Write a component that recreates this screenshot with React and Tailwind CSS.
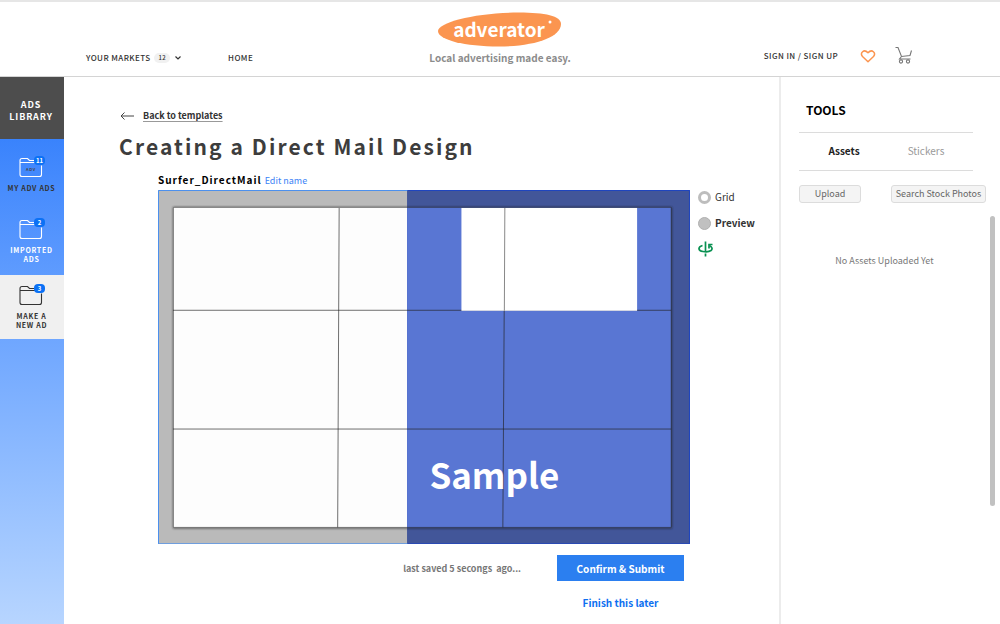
import React from "react";

function Folder({ count, tone, inner }) {
  return (
    <svg viewBox="0 0 32 24" className={"h-6 w-8 " + tone} fill="none" aria-hidden="true">
      <path d="M20 5.500H13.500L11.500 3.500H6Q4 3.500 4 5.500V19.500Q4 21.500 6 21.500H23.500Q25.500 21.500 25.500 19.500V10.500M4 7.500H20" stroke="currentColor" strokeWidth="1.100" />
      {inner && <text x="15" y="15.500" fontSize="4" textAnchor="middle" className="fill-[#454545] font-bold">{inner}</text>}
      <rect x="18" y="1" width="11" height="9" rx="4" className="fill-[#0b71f5]" />
      <text x="23.500" y="7.500" fontSize="6" textAnchor="middle" className="fill-white font-bold tracking-normal">{count}</text>
    </svg>
  );
}

function SideLink({ count, lines, className, tone, inner }) {
  return (
    <a href="#" className={"flex flex-col items-center text-center text-[7px] leading-[9px] font-bold tracking-widest whitespace-nowrap " + className}>
      <Folder count={count} tone={tone} inner={inner} />
      <span className="mt-[5px] pr-px">
        {lines.map((l) => <span key={l} className="block">{l}</span>)}
      </span>
    </a>
  );
}

function Header() {
  return (
    <header className="grid h-[77px] grid-cols-[1fr_160px_1fr] border-t-2 border-b border-t-[#e6e6e6] border-b-[#d4d4d4] text-[8px] font-medium text-[#333]">
      <nav className="flex items-center gap-[46px] pt-[38px] pl-[86px] tracking-wider">
        <button className="flex items-center gap-1 tracking-wider">
          YOUR MARKETS
          <span className="rounded-full bg-[#f1f1f1] px-1 text-[6px] leading-[10px]">12</span>
          <svg viewBox="0 0 8 8" className="size-2" fill="none" aria-hidden="true"><path d="M1.500 2.500L4 5L6.500 2.500" stroke="currentColor" strokeWidth="1.200" /></svg>
        </button>
        <a href="#">HOME</a>
      </nav>
      <div className="flex flex-col items-center pt-[9px]">
        <svg viewBox="0 0 126 36" className="h-9 w-[126px]" role="img" aria-label="adverator">
          <path d="M1 20C1 11 40 1.500 82 1.500C108 1.500 124 5 124 13C124 26 98 35.500 62 35.500C28 35.500 1 29 1 20Z" fill="#fb9550" />
          <text x="62" y="26" fontSize="19" textAnchor="middle" className="fill-white font-bold">adverator</text>
          <circle cx="113" cy="11" r="1.500" fill="#fff" />
        </svg>
        <p className="mt-[3px] text-[10px] leading-4 font-bold whitespace-nowrap text-[#8c8c8c]">Local advertising made easy.</p>
      </div>
      <div className="flex items-center justify-end pt-[31px] pr-[86px]">
        <a href="#" className="pt-0.5 tracking-wider">SIGN IN / SIGN UP</a>
        <button aria-label="Favourites" className="ml-[22px] pt-0.5">
          <svg viewBox="0 0 16 16" className="size-4" fill="none"><path d="M8 13.700L2.500 8.500C-0.300 5 3.800 0.500 8 4.700C12.200 0.500 16.300 5 13.500 8.500Z" stroke="#fb9550" strokeWidth="1.500" strokeLinejoin="round" /></svg>
        </button>
        <button aria-label="Cart" className="ml-[18px]">
          <svg viewBox="0 0 20 18" className="h-[18px] w-5" fill="none" stroke="#777" strokeWidth="1.100"><path d="M1.500 1.500H4L7.500 10.500L16 9.500L17.500 4.500M7.500 10.500L5.500 13H16.500" /><circle cx="7" cy="15.500" r="1.600" /><circle cx="14" cy="15.500" r="1.600" /></svg>
        </button>
      </div>
    </header>
  );
}

function Artboard() {
  return (
    <svg viewBox="0 0 533 355" className="block w-full" role="img" aria-label="Direct mail design">
      <defs>
        <filter id="soft" x="-5%" y="-5%" width="110%" height="110%"><feGaussianBlur stdDeviation="1.200" /></filter>
      </defs>
      <rect width="250" height="355" fill="#bababa" />
      <rect x="249.500" width="283.500" height="355" fill="#425699" />
      <rect x="15" y="17" width="500" height="322" fill="#222" fillOpacity="0.700" filter="url(#soft)" />
      <rect x="15.500" y="17.500" width="234" height="320.500" fill="#fdfdfd" />
      <rect x="249.500" y="17.500" width="264.500" height="320.500" fill="#5976d3" />
      <path d="M15.500 338V17.500H514V338Z" fill="none" stroke="#222" strokeOpacity="0.350" />
      <path d="M15 120.500H514 M15 239.500H514 M181.500 18L180 338 M347.500 18L345.500 338" fill="none" stroke="#222" strokeOpacity="0.650" />
      <rect x="304" y="18" width="176" height="103" fill="#fff" />
      <path d="M347.500 18L347 121" stroke="#888" />
      <path d="M250 0.500H0.500V354.500H250" fill="none" stroke="#4a90ee" />
      <path d="M250 0.500H532.500V354.500H250" fill="none" stroke="#1f45c0" />
      <text x="337" y="300" fontSize="35" textAnchor="middle" className="fill-white font-bold">Sample</text>
    </svg>
  );
}

function ViewOptions() {
  return (
    <div className="flex w-[58px] shrink-0 flex-col gap-[10px] pt-[19px] text-[10px] leading-4">
      <label className="flex items-center gap-1">
        <input type="radio" name="view" className="size-[13px] shrink-0 appearance-none rounded-full border-3 border-[#bdbdbd]" />Grid
      </label>
      <label className="flex items-center gap-1 font-bold">
        <input type="radio" name="view" defaultChecked className="size-[13px] shrink-0 appearance-none rounded-full border border-[#b0b0b0] bg-[#c0c0c0]" />Preview
      </label>
      <button aria-label="Flip design" className="w-4">
        <svg viewBox="0 0 16 16" className="size-4" fill="none" stroke="#0a9152" strokeWidth="1.700">
          <path d="M7.500 0.500V10M7.500 12.500V15.500M4.500 4.500C-0.500 6 0 10 5 10.500C8 11 11 11 13 9.500C14.800 8 14.200 6 11.500 4.500" />
          <path d="M14.500 3.500H11V7.500" />
        </svg>
      </button>
    </div>
  );
}

function Tools() {
  return (
    <aside className="flex w-[221px] shrink-0 justify-between border-l-2 border-[#ececec] pr-[5px] pl-[18px]">
      <div className="w-[187px]">
        <h2 className="mt-[23px] pl-[7px] text-[12px] leading-5 font-bold text-black">TOOLS</h2>
        <div role="tablist" className="mt-3 flex h-[39px] w-[174px] items-center border-y border-[#dcdcdc] pb-0.5 text-[10px]">
          <button role="tab" aria-selected="true" className="w-[90px] font-bold text-[#222]">Assets</button>
          <button role="tab" aria-selected="false" className="w-[74px] text-[#999]">Stickers</button>
        </div>
        <div className="mt-[14px] flex justify-between text-[9px] text-[#666]">
          <button className="h-[18px] w-[62px] rounded-[3px] border border-[#dcdcdc] bg-[#f4f4f4] leading-4">Upload</button>
          <button className="h-[18px] w-[95px] rounded-[3px] border border-[#dcdcdc] bg-[#f4f4f4] leading-4 whitespace-nowrap">Search Stock Photos</button>
        </div>
        <p className="mt-[50px] pr-4 text-center text-[9px] leading-4 text-[#777]">No Assets Uploaded Yet</p>
      </div>
      <div className="mt-[139px] h-[290px] w-[5px] rounded-full bg-[#c1c1c1]" />
    </aside>
  );
}

export default function App() {
  return (
    <div className="flex min-h-screen flex-col bg-white font-['Noto_Sans_CJK_SC','Noto_Sans',sans-serif] text-[#333]">
      <Header />
      <div className="flex grow">
        <aside className="flex w-16 shrink-0 flex-col bg-linear-to-b from-[#2677fb] to-[#b7d5ff]">
          <h2 className="flex h-[62px] items-center justify-center bg-[#4d4d4d] pt-1.5 pr-0.5 text-center text-[9px] leading-3 font-bold tracking-widest text-white">ADS<br />LIBRARY</h2>
          <SideLink count="11" inner="ADV" lines={["MY ADV ADS"]} tone="text-white" className="h-[62px] pt-4 text-[#333]" />
          <SideLink count="2" lines={["IMPORTED", "ADS"]} tone="text-white" className="h-[74px] pt-4 text-white" />
          <SideLink count="3" lines={["MAKE A", "NEW AD"]} tone="text-[#333]" className="h-[64px] bg-[#f0f0f0] pt-2 text-[#333]" />
        </aside>
        <main className="grow pl-[55px]">
          <a href="#" className="mt-[31px] flex items-center gap-2 text-[9px] leading-4 font-bold">
            <svg viewBox="0 0 16 10" className="h-[10px] w-4" fill="none" aria-hidden="true"><path d="M15 5H2M5.500 1.500L2 5L5.500 8.500" stroke="#444" /></svg>
            <span className="underline decoration-[#999] underline-offset-2">Back to templates</span>
          </a>
          <h1 className="mt-1.5 text-[21px] leading-8 font-bold tracking-widest text-[#3d3d3d]">Creating a Direct Mail Design</h1>
          <div className="mt-2 flex gap-2 pr-[23px] pl-[39px]">
            <div className="grow">
              <div className="flex items-center gap-[3px] leading-5">
                <span className="text-[10px] font-bold tracking-widest text-black">Surfer_DirectMail</span>
                <button className="pt-px text-[9px] leading-4 text-[#3b82f6]">Edit name</button>
              </div>
              <Artboard />
              <div className="mt-[11px] flex items-center justify-end gap-9 pr-[6px]">
                <span className="text-[9px] font-bold whitespace-pre text-[#777]">last saved 5 secongs  ago...</span>
                <button className="h-[26px] w-[127px] bg-[#2b7ff0] text-[10px] font-bold text-white">Confirm &amp; Submit</button>
              </div>
              <div className="mt-3 flex justify-end pr-[6px]">
                <button className="w-[127px] text-[10px] leading-5 font-bold text-[#0d6ff0]">Finish this later</button>
              </div>
            </div>
            <ViewOptions />
          </div>
        </main>
        <Tools />
      </div>
    </div>
  );
}
